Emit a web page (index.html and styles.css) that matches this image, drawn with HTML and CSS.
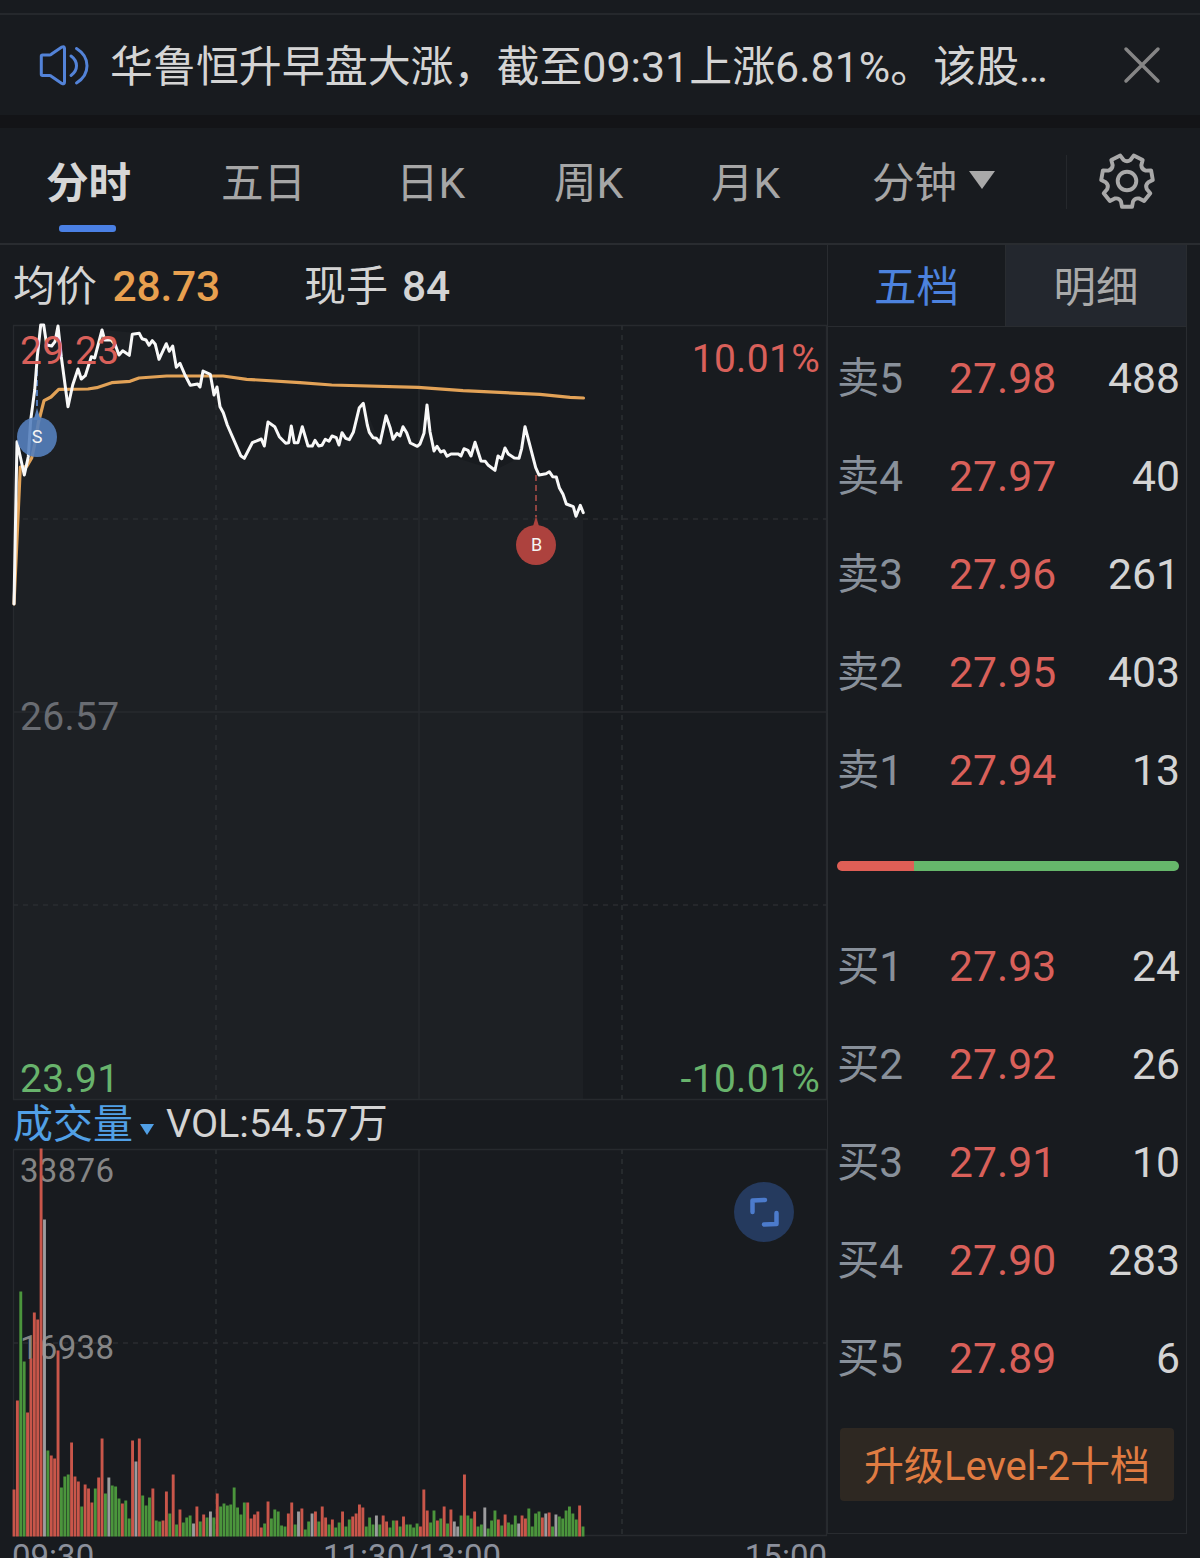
FILE: index.html
```html
<!DOCTYPE html>
<html lang="zh-CN">
<head>
<meta charset="utf-8">
<title>分时</title>
<link rel="stylesheet" href="styles.css">
</head>
<body>
<div class="strip"></div>
<section class="news">
  <svg class="news-icon" width="54" height="44" viewBox="36 43 54 44">
    <path d="M42.500 55h7q1 0 1.800-.7l10.500-7.200q2.700-1.400 2.700 1.400v33.500q0 2.800-2.700 1.400l-10.500-7.200q-.8-.7-1.800-.7h-7q-1.200 0-1.200-1.200v-18.100q0-1.200 1.200-1.200z"/>
    <path d="M71 56q5.500 4 5.500 9.800t-5.500 9.700M76.500 48.500q10.500 6.500 10.500 17.300t-10.500 17.200"/>
  </svg>
  <p class="news-text">华鲁恒升早盘大涨，截至09:31上涨6.81%。该股…</p>
  <svg class="close" width="40" height="40" viewBox="0 0 40 40"><path d="M4 4L36 36M36 4L4 36"/></svg>
</section>
<div class="band"></div>
<nav class="tabs">
  <div class="tab active">分时</div>
  <div class="tab">五日</div>
  <div class="tab">日K</div>
  <div class="tab">周K</div>
  <div class="tab">月K</div>
  <div class="tab">分钟<i class="caret"></i></div>
  <div class="settings">
    <svg width="60" height="60" viewBox="-30 -29 60 60">
      <path d="M6.050 20.400L5 25.800H-5L-6.050 20.400Q-8 16.700-12.200 17.500L-17.100 20L-23.300 12.200L-19.700 8Q-18 4.100-21.300 1.350L-25.800-.9L-24.100-10.600L-18.600-10.400Q-14.500-11.500-14.300-15.800L-15.700-21.100L-6.700-25.400L-3.400-21Q0-18.500 3.400-21L6.700-25.400L15.700-21.100L14.300-15.800Q14.500-11.500 18.600-10.400L24.100-10.600L25.800-.9L21.300 1.350Q18 4.100 19.700 8L23.300 12.200L17.100 20L12.200 17.500Q8 16.700 6.050 20.400z"/>
      <circle r="9.300"/>
    </svg>
  </div>
</nav>
<main class="main">
  <section class="left">
    <div class="quote">
      <span>均价</span><b class="avg">28.73</b>
      <span class="hand">现手</span><b>84</b>
    </div>
    <svg class="chart" width="827" height="775" viewBox="0 325 827 775">
      <path class="area" d="M14 604L17 442L24 475L35 390L41 326H58L68 407L78 369L85 376L102 330L139 333L159 359L172 346L190 385L210 374L244 458L268 422L286 443L312 446L349 440L363 403L380 443L403 427L417 446L427 405L434 451L495 470L519 458L525 427L539 475L556 477L576 516L583 512V1100H14z"/>
      <g class="grid">
        <path d="M13.500 325.500H826.500V1099.500H13.500zM419 325V1100M13 712H827"/>
        <path class="dash" d="M216 325V1100M622 325V1100M13 519H827M13 905H827"/>
      </g>
      <text class="mid" x="20" y="730">26.57</text>
      <path class="sell-line" d="M37 360V410"/>
      <polyline class="avg-line" points="14,604 20.300,467 26.700,466.500 31.700,458 35,443 38.300,423 44,400.700 51,397 58.700,389.300 88,389 96.700,387.700 111.700,382.700 130,381.300 139,378 166.700,376 223,376 246.700,379.300 300,382.700 331.700,385 418,387.300 463,390.700 540,394.300 570,397.300 583.500,398"/>
      <polyline class="price-line" points="14,604 17,441.700 24.300,475 28.300,456.700 30.700,420 34.700,390 37.300,356.700 40.700,325 43.700,325 46.700,345 51.700,346 55,341.700 58,326 61.300,356.700 68,406.700 72.700,385 78,369 81.300,379 85.300,375.700 91.300,356.700 94.700,358 102,330 104.700,340 111.300,340 115.300,345 119,355 122.700,350.700 129.300,355.300 132.300,334.300 139.300,333.300 142,338.700 146,340 149,345.300 152.300,340.700 155.300,344.300 159,359.300 166.300,343.700 169.300,351.300 172.700,346 176.300,367.300 180,363.300 185,375 190.300,385.300 197.700,384 200,387 203,371 210.300,374.300 214,395 217,387 220,406.700 223.300,412.700 227.300,425 240.700,455.700 244.300,458.300 252.300,442.700 261.300,439 264.300,446 268,422 274.700,426.700 279.300,436.700 285.700,443.300 288.700,442.700 291.300,426 294.300,442.700 298,442.700 302.300,426.700 308,446 312.300,446 315,440.300 318.700,446 322,445.300 325.300,439.300 329,441.300 332,436 336.300,437.700 339,445 342,432.700 345.700,438.300 349.300,439.700 353.300,432.300 359.300,407.700 363.300,403.300 367.300,425 369.300,432.300 373,437.700 376.300,438.300 380,443 386,415.700 390.300,428.300 393,439.300 397,433.300 400,436 403,426.700 406.700,432.700 410.300,443 417.300,446.300 420,444 424,433.300 427,405 430,431.700 434,451 437,446.300 440.700,452 444,450.700 447,456.300 451,454 458.300,454 461,456 464,448.700 468,450.300 471,456 475,442.300 481,461 485.300,461.300 488.300,465.300 495,470.300 498,456 501.700,458.700 505,448 508.300,454 514.300,458 519,458.300 521.700,448.300 525,426.700 535.700,467.700 539,475 546,473.700 549.300,471.700 552.700,476.700 556.300,477 559.300,487.700 563,494.300 566.300,504 573.300,506.700 576,516.300 580.300,505.300 583.300,512.700"/>
      <g class="sell"><path d="M33.500 420L37 408L40.500 420z"/><circle cx="37" cy="437" r="20"/><text x="37" y="443">S</text></g>
      <path class="buy-line" d="M536 475V517"/>
      <g class="buy"><path d="M532.500 528L536 516L539.500 528z"/><circle cx="536" cy="545" r="20"/><text x="536.500" y="551">B</text></g>
      <text class="up" x="20" y="364">29.23</text>
      <text class="up end" x="820" y="372">10.01%</text>
      <text class="down" x="20" y="1092">23.91</text>
      <text class="down end" x="820" y="1092">-10.01%</text>
    </svg>
    <div class="indicator"><span class="name">成交量</span><i class="caret"></i><span class="value">VOL:54.57万</span></div>
    <div class="volume">
      <svg class="chart" width="827" height="387" viewBox="0 1149 827 387">
        <g class="grid">
          <path d="M13.500 1149.500H826.500V1535.500H13.500zM419 1149V1536"/>
          <path class="dash" d="M216 1149V1536M622 1149V1536M13 1343H827"/>
        </g>
        <text class="vol" x="20" y="1182">33876</text>
        <text class="vol" x="20" y="1359">16938</text>
        <g id="bars"></g>
      </svg>
      <button class="expand" aria-label="全屏">
        <svg width="60" height="60" viewBox="0 0 60 60"><path d="M18.500 30V18.500L31 18M42.500 31V42L30 42.500"/></svg>
      </button>
    </div>
    <div class="axis"><span>09:30</span><span class="noon">11:30/13:00</span><span>15:00</span></div>
  </section>
  <aside class="book">
    <div class="book-tabs"><div class="on">五档</div><div>明细</div></div>
    <div class="row"><span>卖5</span><em>27.98</em><span>488</span></div>
    <div class="row"><span>卖4</span><em>27.97</em><span>40</span></div>
    <div class="row"><span>卖3</span><em>27.96</em><span>261</span></div>
    <div class="row"><span>卖2</span><em>27.95</em><span>403</span></div>
    <div class="row"><span>卖1</span><em>27.94</em><span>13</span></div>
    <div class="ratio"><i></i></div>
    <div class="row"><span>买1</span><em>27.93</em><span>24</span></div>
    <div class="row"><span>买2</span><em>27.92</em><span>26</span></div>
    <div class="row"><span>买3</span><em>27.91</em><span>10</span></div>
    <div class="row"><span>买4</span><em>27.90</em><span>283</span></div>
    <div class="row"><span>买5</span><em>27.89</em><span>6</span></div>
    <div class="upgrade">升级Level-2十档</div>
  </aside>
</main>
<script src="volume.js"></script>
</body>
</html>
```
FILE: styles.css
```css
* { box-sizing: border-box; }
body {
  margin: 0;
  height: 1558px;
  overflow: hidden;
  background: #181b1f;
  color: #d4d4d4;
  font: 42px/1 Roboto, "Noto Sans CJK SC", sans-serif;
}
svg { display: block; }
.strip { height: 15px; border-bottom: 2px solid #25282c; }
.news { height: 100px; display: flex; align-items: center; padding: 0 38px 0 36px; }
.news-icon { fill: none; stroke: #5383d8; stroke-width: 3; stroke-linecap: round; }
.news-text { margin: 0 0 0 20px; flex: 1; font-size: 42.950px; line-height: 60px; padding-top: 4px; white-space: nowrap; }
.close { fill: none; stroke: #858585; stroke-width: 3.5; stroke-linecap: round; }
.band { height: 13px; background: #131417; }
.tabs {
  height: 117px;
  display: grid;
  grid-template-columns: 175px 175px 158px 157px 161px 194px 1fr;
  padding-left: 46px;
  border-bottom: 2px solid #292c30;
  color: #a6a6a6;
}
.tab { position: relative; font-size: 42.600px; line-height: 60px; padding-top: 25px; white-space: nowrap; }
.tab.active { color: #d6d6d6; font-weight: 700; }
.tab.active::after {
  content: "";
  position: absolute;
  left: 13px;
  top: 97px;
  width: 57px;
  height: 7px;
  border-radius: 3px;
  background: #4a80e4;
}
.caret { display: inline-block; border: solid transparent; }
.tab .caret { border-width: 18px 13.500px 0; border-top-color: #a9a9a9; margin-left: 12px; vertical-align: 9px; }
.settings { height: 54px; margin-top: 27px; border-left: 1px solid #25282c; display: flex; align-items: center; padding-left: 30px; }
.settings svg { fill: none; stroke: #a9a9a9; stroke-width: 3.900; stroke-linejoin: round; }
.main { display: grid; grid-template-columns: 827px 360px; }
.left { min-width: 0; }
.quote { height: 80px; display: flex; align-items: center; padding: 3px 0 0 13px; line-height: 60px; white-space: nowrap; }
.quote b { font-weight: 500; font-size: 42.500px; letter-spacing: -.2px; margin-left: 15.500px; }
.quote .avg { color: #e8a04f; }
.hand { margin-left: 84px; }
.quote .hand + b { margin-left: 14px; }
.chart { overflow: visible; font-size: 39px; letter-spacing: .3px; }
.area { fill: #1d2024; }
.grid path { fill: none; stroke: #272a2e; stroke-width: 1.300; }
.grid .dash { stroke-dasharray: 5 5; stroke: #2a2d31; stroke-width: 1.700; }
.avg-line, .price-line { fill: none; stroke-linejoin: round; stroke-linecap: round; }
.avg-line { stroke: #e2a257; stroke-width: 3.200; }
.price-line { stroke: #f8f8f8; stroke-width: 3; }
.sell-line, .buy-line { fill: none; stroke-width: 1.800; stroke-dasharray: 6 4; }
.sell-line { stroke: #5580c4; }
.buy-line { stroke: #9c4845; }
.sell { fill: #5580bd; }
.sell circle { fill-opacity: .9; }
.buy { fill: #ad423e; }
.sell text, .buy text { fill: #f4f4f4; font-size: 18px; text-anchor: middle; letter-spacing: 0; }
.up { fill: #d9605a; }
.down { fill: #68b36c; }
.mid { fill: #696c72; }
.end { text-anchor: end; }
.vol { fill: #858585; font-size: 33px; letter-spacing: .3px; }
.indicator { height: 49px; display: flex; align-items: center; padding-left: 13px; font-size: 39px; line-height: 48px; white-space: nowrap; }
.indicator .name { color: #51a0e6; font-size: 40px; }
.indicator .value { font-size: 39.500px; margin-top: -2px; }
.indicator .caret { border-width: 11px 7px 0; border-top-color: #51a0e6; margin: 10px 12px 0 7px; }
.volume { position: relative; height: 387px; }
#bars path { fill: none; stroke-width: 2.900; }
.bar-r { stroke: #c9564a; }
.bar-g { stroke: #4b953c; }
.bar-w { stroke: #9c9c9e; }
.expand { position: absolute; left: 734px; top: 33px; width: 60px; height: 60px; padding: 0; border: 0; border-radius: 50%; background: #253a5e; }
.expand svg { fill: none; stroke: #4c7bcc; stroke-width: 4.500; stroke-linecap: round; stroke-linejoin: round; }
.axis { height: 22px; overflow: hidden; display: grid; grid-template-columns: 311px 1fr auto; padding: 1px 0 0 12px; font-size: 33px; line-height: 40px; color: #8b909c; }
.book { height: 1289px; border: 1px solid #292c30; border-top: 0; }
.book-tabs { display: grid; grid-template-columns: 178px 1fr; height: 82px; border-bottom: 1px solid #292c30; text-align: center; font-size: 42.500px; line-height: 85px; color: #a9a9a9; }
.book-tabs div { background: #23272e; height: 81px; }
.book-tabs .on { background: none; color: #4c82de; border-right: 1px solid #292c30; }
.row { height: 98px; display: grid; grid-template-columns: 111px 1fr auto; align-items: center; padding: 3px 6px 0 10px; line-height: 60px; font-size: 42.700px; }
.row span:first-child { color: #88909a; font-size: 42.300px; padding-top: 2px; margin-left: -1px; }
.row em { font-style: normal; color: #d9605a; }
.ratio { height: 98px; display: flex; padding: 44px 7px 0 9px; }
.ratio i { flex: 1; height: 10px; border-radius: 5px; background: linear-gradient(90deg, #df5f56 77px, #66b76b 77px); }
.upgrade { margin: 23px 12px 0 12px; height: 73px; border-radius: 4px; background: #2e2822; color: #e07c42; text-align: center; line-height: 77px; font-size: 40px; white-space: nowrap; }
```
FILE: volume.js
```javascript
// One entry per minute: colour (r rise, g fall, w flat) and bar height.
const volumes = `r47 r136 g245 g175 r124 r178 r224 r217 r388 w317 g86 r81 r78 r186 g49 g60 g62 r94 r60 r55
g30 r52 r48 r34 g48 r59 r98 g43 w59 g51 g50 g38 r33 g36 g18 r96 w75 r98 g41 g31
g39 r48 g16 g15 r16 r45 g23 r62 g12 r27 g14 g19 g21 w13 r30 g15 r22 g19 w25 g19
r43 g30 g33 g31 g32 g49 g29 g22 g34 r34 r18 r22 r25 r9 g13 r35 g18 g27 g25 g11
g10 r23 r34 g12 w25 r28 g7 g15 w23 r25 g15 r30 r19 g12 r17 g9 g14 r25 g10 g17
r20 r23 r32 r29 g10 g19 g12 w21 g12 r21 r15 g9 g16 r16 g10 r20 g12 g12 g9 g13
r10 r47 r26 g14 g26 r16 g18 r30 g13 r27 w15 w10 g21 r62 g21 g18 r25 g10 g12 w29
g8 g16 g26 r17 g11 r22 g14 g12 g21 w13 r21 r18 g28 g10 g23 g25 r19 w23 r24 g10
w22 g20 g18 g26 g30 g23 g17 r31 g10`.split(/\s+/);

const base = 1536.5;
const step = 3.387;
const group = document.getElementById('bars');
volumes.forEach((v, i) => {
  const bar = document.createElementNS('http://www.w3.org/2000/svg', 'path');
  const x = (14 + i * step).toFixed(2);
  bar.setAttribute('class', 'bar-' + v[0]);
  bar.setAttribute('d', `M${x} ${base}V${base - Number(v.slice(1))}`);
  group.appendChild(bar);
});
```
